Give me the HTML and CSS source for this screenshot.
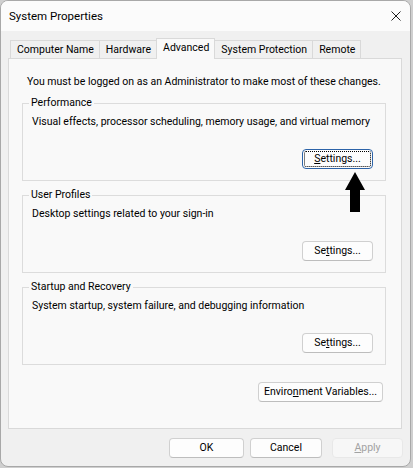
FILE: index.html
```html
<!DOCTYPE html>
<html lang="en">
<head>
<meta charset="utf-8">
<title>System Properties</title>
<link rel="stylesheet" href="styles.css">
</head>
<body>
<div class="window">
  <div class="titlebar">
    <span class="title">System Properties</span>
    <svg class="close" width="10" height="10" viewBox="0 0 10 10" aria-label="Close">
      <path d="M0.5 0.5 L9.5 9.5 M9.5 0.5 L0.5 9.5" stroke="#1f1f1f" stroke-width="1" fill="none"/>
    </svg>
  </div>
  <div class="content">
    <div class="tabs">
      <div class="tab">Computer Name</div>
      <div class="tab">Hardware</div>
      <div class="tab selected">Advanced</div>
      <div class="tab">System Protection</div>
      <div class="tab">Remote</div>
    </div>
    <div class="panel">
      <p class="note">You must be logged on as an Administrator to make most of these changes.</p>
      <fieldset class="group">
        <legend>Performance</legend>
        <p>Visual effects, processor scheduling, memory usage, and virtual memory</p>
        <div class="actions"><button class="btn btn-settings focused"><span class="focus-ring"><u>S</u>ettings...</span></button></div>
      </fieldset>
      <fieldset class="group">
        <legend>User Profiles</legend>
        <p>Desktop settings related to your sign-in</p>
        <div class="actions"><button class="btn btn-settings">Se<u>t</u>tings...</button></div>
      </fieldset>
      <fieldset class="group">
        <legend>Startup and Recovery</legend>
        <p>System startup, system failure, and debugging information</p>
        <div class="actions"><button class="btn btn-settings">Se<u>t</u>tings...</button></div>
      </fieldset>
      <div class="env-row"><button class="btn btn-env">Enviro<u>n</u>ment Variables...</button></div>
    </div>
    <div class="footer">
      <button class="btn btn-ok">OK</button>
      <button class="btn btn-cancel">Cancel</button>
      <button class="btn btn-apply" disabled><u>A</u>pply</button>
    </div>
  </div>
</div>
<svg class="arrow" width="30" height="48" viewBox="0 0 30 48">
  <polygon points="15,4 5,22 10,22 10,44 20,44 20,22 25,22" fill="#000"/>
</svg>
</body>
</html>
```
FILE: styles.css
```css
* { box-sizing: border-box; }
html, body { margin: 0; padding: 0; }
body {
  width: 413px;
  height: 468px;
  overflow: hidden;
  background: #cfcfcf;
  font-family: Roboto, "Liberation Sans", sans-serif;
  font-size: 10.5px;
  color: #000;
  position: relative;
}
.window {
  width: 411px;
  height: 467px;
  border: 1px solid #a8a8a8;
  border-radius: 8px;
  overflow: hidden;
  background: #f0f0f0;
  display: flex;
  flex-direction: column;
}
.titlebar {
  height: 30px;
  flex: none;
  background: #fbfbfb;
  display: flex;
  align-items: center;
  justify-content: space-between;
  padding: 0 9px 0 8px;
}
.title { font-size: 11.5px; color: #000; }
.close { display: block; }
.content {
  flex: 1;
  display: flex;
  flex-direction: column;
  padding: 7px 8px 0 7px;
}
.tabs {
  display: flex;
  align-items: flex-end;
  height: 20px;
  margin-left: 2px;
}
.tab {
  height: 18px;
  line-height: 17px;
  padding: 0 5px 0 6px;
  border: 1px solid #d9d9d9;
  border-bottom: none;
  background: #f0f0f0;
  margin-left: -1px;
  white-space: nowrap;
}
.tab:first-child { margin-left: 0; }
.tab.selected {
  height: 21px;
  line-height: 17px;
  margin-bottom: -1px;
  background: #f9f9f9;
  position: relative;
  z-index: 1;
}
.panel {
  height: 371px;
  flex: none;
  border: 1px solid #d9d9d9;
  background: #f9f9f9;
  padding: 16px 15px 0 13px;
}
.note {
  margin: 0 0 7px 5px;
  line-height: 14px;
}
.group {
  margin: 0 0 7px 0;
  border: 1px solid #dcdcdc;
  padding: 0 12px 11px 9px;
  min-width: 0;
}
.group legend {
  padding: 0 2px;
  margin-left: -3px;
  line-height: 14px;
}
.group p {
  margin: 5px 0 20px 0;
  line-height: 14px;
}
.actions {
  display: flex;
  justify-content: flex-end;
}
.btn {
  height: 20px;
  padding: 0;
  border: 1px solid #d0d0d0;
  border-bottom-color: #bdbdbd;
  border-radius: 4px;
  background: #fdfdfd;
  font-family: inherit;
  font-size: inherit;
  color: #000;
  line-height: 18px;
  text-align: center;
}
.btn u { text-decoration-thickness: 1px; text-underline-offset: 1px; }
.btn-settings { width: 71px; }
.btn.focused {
  border: 1px solid #2c63a8;
  padding: 1px;
  display: flex;
}
.focus-ring {
  flex: 1;
  border: 1px dotted #000;
  border-radius: 2px;
  line-height: 14px;
}
.env-row {
  margin-top: 17px;
  display: flex;
  justify-content: flex-end;
  padding-right: 3px;
}
.btn-env { width: 125px; }
.footer {
  display: flex;
  justify-content: flex-end;
  gap: 6px;
  padding-top: 9px;
  margin-right: -1px;
}
.btn-ok { width: 75px; }
.btn-cancel { width: 72px; }
.btn-apply {
  width: 71px;
  margin-left: 4px;
  background: #f7f7f7;
  border-color: #e8e8e8;
  color: #a2a2a2;
}
.arrow {
  position: absolute;
  left: 340px;
  top: 168px;
}
```
